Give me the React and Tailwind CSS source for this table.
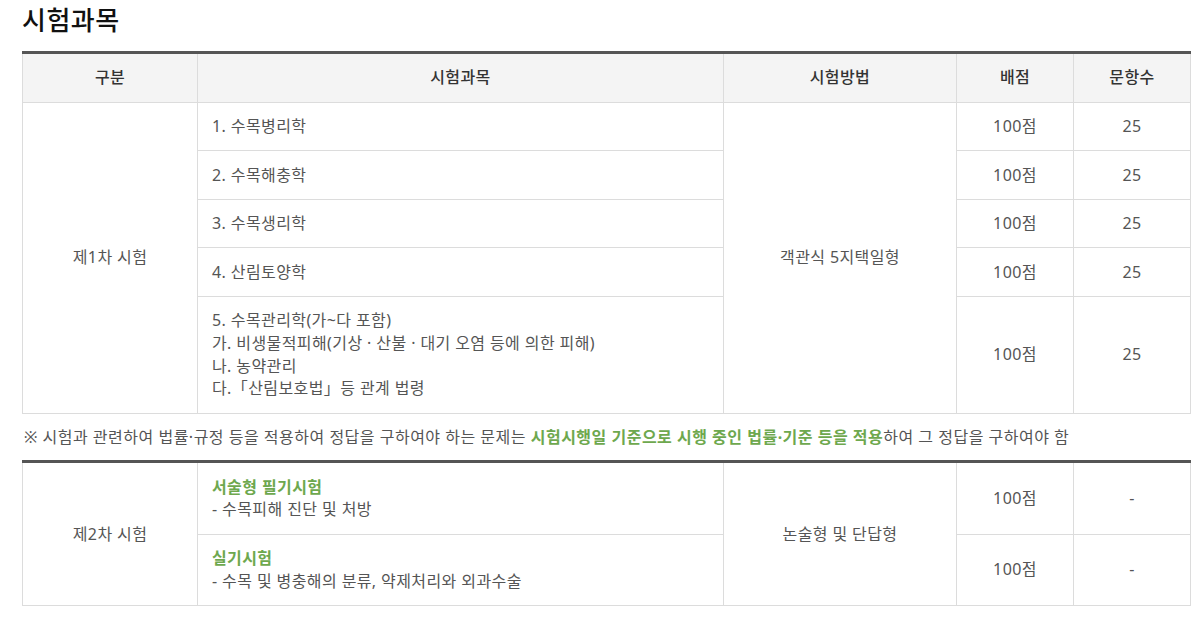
import React from "react";

const font = { fontFamily: '"Noto Sans", "Noto Sans CJK KR", sans-serif' };

const firstRows = [
  "1. 수목병리학",
  "2. 수목해충학",
  "3. 수목생리학",
  "4. 산림토양학",
];

const td = "border border-[#dcdcdc] text-[16px] leading-[22.7px] tracking-[0.4px] text-[#555] py-[12.45px]";

export default function App() {
  return (
    <div className="bg-white w-[1204px] h-[617px] overflow-hidden pl-[22px] pr-[14px]" style={font}>
      <h2 className="text-[26px] leading-[36px] font-medium text-[#111] tracking-[0.5px] pt-[2px] mb-[13px]">시험과목</h2>

      <table className="w-[1168px] border-collapse table-fixed border-t-[3px] border-t-[#555]">
        <colgroup>
          <col className="w-[175px]" />
          <col className="w-[526px]" />
          <col className="w-[233px]" />
          <col className="w-[117px]" />
          <col className="w-[117px]" />
        </colgroup>
        <thead>
          <tr className="bg-[#f4f4f4]">
            {["구분", "시험과목", "시험방법", "배점", "문항수"].map((h) => (
              <th key={h} className="border border-[#dcdcdc] border-t-0 text-[16px] leading-[22.7px] tracking-[0.4px] font-medium text-[#333] py-[12.45px]">
                {h}
              </th>
            ))}
          </tr>
        </thead>
        <tbody>
          {firstRows.map((s, i) => (
            <tr key={s}>
              {i === 0 && (
                <td rowSpan={5} className={`${td} text-center`}>제1차 시험</td>
              )}
              <td className={`${td} text-left px-[14px]`}>{s}</td>
              {i === 0 && (
                <td rowSpan={5} className={`${td} text-center`}>객관식 5지택일형</td>
              )}
              <td className={`${td} text-center`}>100점</td>
              <td className={`${td} text-center`}>25</td>
            </tr>
          ))}
          <tr>
            <td className={`${td} text-left px-[14px]`}>
              5. 수목관리학(가~다 포함)<br />
              가. 비생물적피해(기상 · 산불 · 대기 오염 등에 의한 피해)<br />
              나. 농약관리<br />
              다.「산림보호법」등 관계 법령
            </td>
            <td className={`${td} text-center`}>100점</td>
            <td className={`${td} text-center`}>25</td>
          </tr>
        </tbody>
      </table>

      <p className="text-[16px] leading-[22.7px] tracking-[0.5px] text-[#555] pl-[2px] pt-[12px] pb-[12px]">
        ※ 시험과 관련하여 법률·규정 등을 적용하여 정답을 구하여야 하는 문제는{" "}
        <span className="text-[#6ea84e] font-bold">시험시행일 기준으로 시행 중인 법률·기준 등을 적용</span>하여 그 정답을 구하여야 함
      </p>

      <table className="w-[1168px] border-collapse table-fixed border-t-[3px] border-t-[#555]">
        <colgroup>
          <col className="w-[175px]" />
          <col className="w-[526px]" />
          <col className="w-[233px]" />
          <col className="w-[117px]" />
          <col className="w-[117px]" />
        </colgroup>
        <tbody>
          <tr>
            <td rowSpan={2} className={`${td} border-t-0 text-center`}>제2차 시험</td>
            <td className={`${td} border-t-0 text-left px-[14px]`}>
              <span className="text-[#6ea84e] font-bold">서술형 필기시험</span><br />
              - 수목피해 진단 및 처방
            </td>
            <td rowSpan={2} className={`${td} border-t-0 text-center`}>논술형 및 단답형</td>
            <td className={`${td} border-t-0 text-center`}>100점</td>
            <td className={`${td} border-t-0 text-center`}>-</td>
          </tr>
          <tr>
            <td className={`${td} text-left px-[14px]`}>
              <span className="text-[#6ea84e] font-bold">실기시험</span><br />
              - 수목 및 병충해의 분류, 약제처리와 외과수술
            </td>
            <td className={`${td} text-center`}>100점</td>
            <td className={`${td} text-center`}>-</td>
          </tr>
        </tbody>
      </table>
    </div>
  );
}
